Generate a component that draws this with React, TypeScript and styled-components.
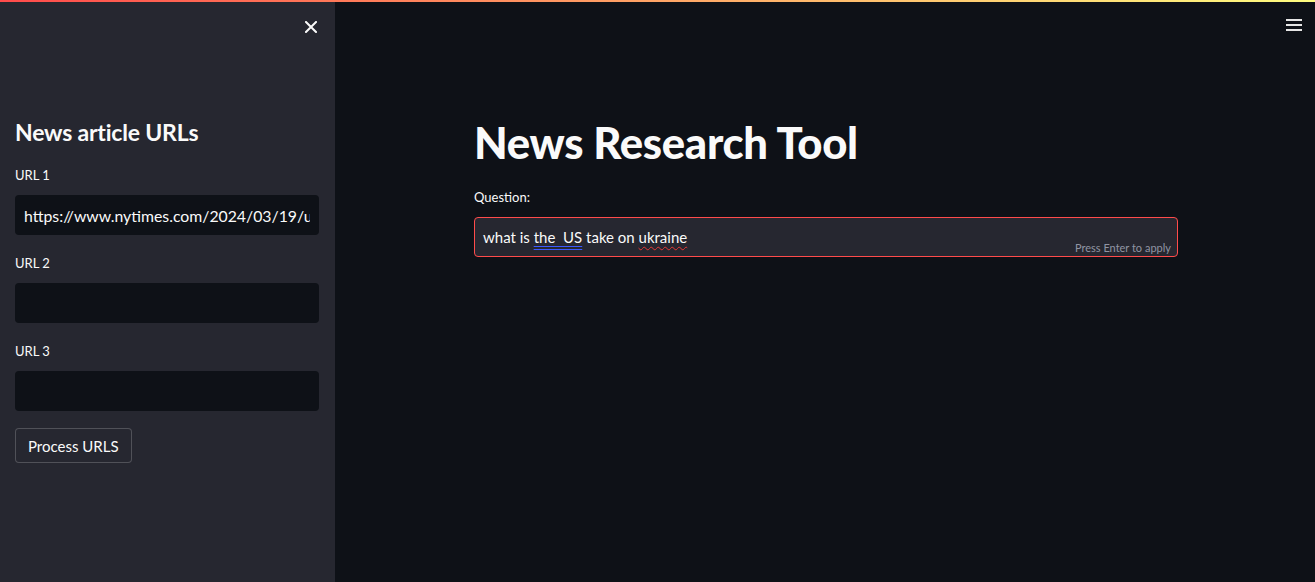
import React from "react";
import styled, { createGlobalStyle } from "styled-components";

const Global = createGlobalStyle`
  html, body { margin: 0; padding: 0; background: #0e1117; }
  body { font-family: Lato, "Noto Sans", sans-serif; color: #fafafa; }
  * { box-sizing: border-box; }
`;

const Page = styled.div`
  position: relative;
  display: flex;
  width: 1315px;
  height: 582px;
  overflow: hidden;
  background: #0e1117;
`;

const Decoration = styled.div`
  position: absolute;
  top: 0;
  left: 0;
  right: 0;
  height: 2px;
  background: linear-gradient(90deg, #ff4b4b, #fffd80);
  z-index: 2;
`;

const Sidebar = styled.aside`
  width: 335px;
  flex-shrink: 0;
  background: #262730;
  display: flex;
  flex-direction: column;
  padding: 0 16px 0 15px;
`;

const SidebarTop = styled.div`
  height: 52px;
  display: flex;
  align-items: flex-end;
  justify-content: flex-end;
  padding-right: 2px;
  padding-bottom: 19px;
`;

const IconButton = styled.button`
  background: none;
  border: none;
  padding: 0;
  display: flex;
  color: #fafafa;
  cursor: pointer;
`;

const SideHeading = styled.h2`
  margin: 65px 0 18px;
  font-size: 23px;
  font-weight: 700;
  line-height: 30px;
  letter-spacing: -0.2px;
`;

const Field = styled.div`
  display: flex;
  flex-direction: column;
  margin-bottom: 18px;
`;

const Label = styled.label`
  font-size: 13px;
  line-height: 21px;
  height: 21px;
  margin-bottom: 9px;
  color: #fafafa;
`;

const TextInput = styled.input`
  height: 40px;
  width: 100%;
  border: none;
  outline: none;
  border-radius: 4px;
  background: #0e1117;
  color: #fafafa;
  font-family: inherit;
  font-size: 15.8px;
  padding: 0 9px;
`;

const Button = styled.button`
  align-self: flex-start;
  height: 35px;
  padding: 0 12px;
  margin-top: -1px;
  background: #262730;
  border: 1px solid rgba(250, 250, 250, 0.2);
  border-radius: 4px;
  color: #fafafa;
  font-family: inherit;
  font-size: 15px;
`;

const Main = styled.main`
  flex: 1;
  position: relative;
  display: flex;
  justify-content: center;
  padding-left: 2px;
`;

const MenuButton = styled(IconButton)`
  position: absolute;
  top: 18px;
  right: 13px;
`;

const Content = styled.div`
  width: 704px;
  display: flex;
  flex-direction: column;
  padding-top: 114px;
`;

const Title = styled.h1`
  margin: 0 0 17px;
  font-size: 43.6px;
  font-weight: 900;
  line-height: 56px;
  letter-spacing: -0.3px;
`;

const QuestionBox = styled.div`
  position: relative;
  height: 40px;
  border: 1px solid #ff4b4b;
  border-radius: 4px;
  background: #262730;
  display: flex;
  align-items: center;
  padding: 0 8px;
  font-size: 15px;
  color: #fafafa;
  white-space: pre;
`;

const Grammar = styled.span`
  text-decoration: underline double #3d5afe;
  text-underline-offset: 3px;
`;

const Spell = styled.span`
  text-decoration: underline wavy #e53935;
  text-decoration-thickness: 1px;
  text-underline-offset: 3px;
`;

const Hint = styled.span`
  position: absolute;
  right: 6px;
  bottom: 2px;
  font-size: 11px;
  color: #a3a8b8;
  opacity: 0.85;
`;

export default function App() {
  return (
    <>
      <Global />
      <Page>
        <Decoration />
        <Sidebar>
          <SidebarTop>
            <IconButton aria-label="Close">
              <svg width="12" height="12" viewBox="0 0 12 12">
                <path d="M1 1L11 11M11 1L1 11" stroke="#fafafa" strokeWidth="2" strokeLinecap="square" />
              </svg>
            </IconButton>
          </SidebarTop>
          <SideHeading>News article URLs</SideHeading>
          <Field>
            <Label>URL 1</Label>
            <TextInput readOnly defaultValue="https://www.nytimes.com/2024/03/19/us/politics/biden-ukraine.html" />
          </Field>
          <Field>
            <Label>URL 2</Label>
            <TextInput readOnly defaultValue="" />
          </Field>
          <Field>
            <Label>URL 3</Label>
            <TextInput readOnly defaultValue="" />
          </Field>
          <Button>Process URLS</Button>
        </Sidebar>
        <Main>
          <MenuButton aria-label="Menu">
            <svg width="16" height="14" viewBox="0 0 16 14">
              <path d="M0 2H16M0 7H16M0 12H16" stroke="#e6e6e6" strokeWidth="2" />
            </svg>
          </MenuButton>
          <Content>
            <Title>News Research Tool</Title>
            <Label>Question:</Label>
            <QuestionBox>
              what is <Grammar>the  US</Grammar> take on <Spell>ukraine</Spell>
              <Hint>Press Enter to apply</Hint>
            </QuestionBox>
          </Content>
        </Main>
      </Page>
    </>
  );
}
